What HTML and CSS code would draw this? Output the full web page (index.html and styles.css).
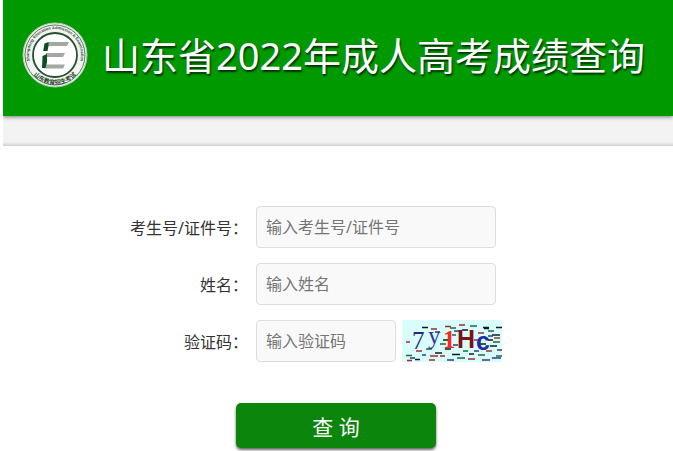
FILE: index.html
```
<!DOCTYPE html>
<html lang="zh-CN">
<head>
    <meta charset="UTF-8">
    <meta name="viewport" content="width=device-width, initial-scale=1.0">
    <title>山东省2022年成人高考成绩查询</title>
    <link rel="stylesheet" href="styles.css">
</head>
<body>
    <!-- 页头 -->
    <header class="header">
        <svg class="logo" viewBox="0 0 66 66" aria-hidden="true">
            <defs>
                <path id="arcTop" d="M 10.800 46.600 A 26 26 0 1 1 55.200 46.600"/>
                <path id="arcBottom" d="M 5 41 A 29 29 0 0 0 61 41"/>
            </defs>
            <circle cx="33" cy="33" r="32" fill="#f0f4f0" stroke="#b5cdb5"/>
            <circle cx="33" cy="33" r="30" fill="#f0f3f0" stroke="#5f7a62"/>
            <circle cx="33" cy="33" r="22" fill="#fff" stroke="#24502d" stroke-width="1.800"/>
            <text class="logo-en"><textPath href="#arcTop" startOffset="50%" text-anchor="middle">Shangdong Education Admission &amp; Examination</textPath></text>
            <text class="logo-cn"><textPath href="#arcBottom" startOffset="50%" text-anchor="middle">山东教育招生考试</textPath></text>
            <g fill="#a3a8a3">
                <path d="M26 20h21l-2 4h-19z"/>
                <path d="M24 31h19l-2 4h-17z"/>
                <path d="M22 42.500h21l-2 4h-19z"/>
            </g>
            <path fill="#0d4f20" d="M22.500 21.500l4-1.500v4l-1 5h-4.300zM20.500 34l4.500-2v8l-1.500 6h-3.500z"/>
        </svg>
        <h1>山东省2022年成人高考成绩查询</h1>
    </header>
    <div class="bar"></div>

    <!-- 查询表单 -->
    <form class="query">
        <div class="row">
            <label for="ksh">考生号/证件号：</label>
            <input type="text" id="ksh" placeholder="输入考生号/证件号">
        </div>
        <div class="row">
            <label for="xm">姓名：</label>
            <input type="text" id="xm" placeholder="输入姓名">
        </div>
        <div class="row">
            <label for="yzm">验证码：</label>
            <div class="code">
                <input type="text" id="yzm" placeholder="输入验证码">
                <svg class="captcha" viewBox="0 0 100 42" role="img" aria-label="验证码">
                    <rect width="100" height="42" fill="#d9fdfa"/>
                    <g fill="none" stroke-width="1.500">
                        <path stroke="#17171f" d="M20 7.500h6M81 7.500h6M82 8.500h5M90 15h8M60 10h6M33 33h7M50 34.500h8M78 24h6M88 26h7M13 39.500h5M43 29h6M67 34h5M94 7.500h6M41 20h5M86 20h5"/>
                        <path stroke="#1d6a3a" d="M48 8h6M68 6h7M4 35.500h6M55 38h8M86 11h6M91 22h7M38 24h6M24 29h6M76 35h7M50 15h4M94 36h6M61 31h5"/>
                        <path stroke="#a32b35" d="M29 9h6M43 6.500h6M57 5h6M76 13h6M92 18h6M5 40.500h5M28 36h8M27 40h6M66 39h7M84 31h6M72 20h6M14 31h6M38 36h5M4 22h4"/>
                        <path stroke="#2f3a8c" d="M33 12h5M52 11h6M86 16h5M95 30h5M8 38h5M45 40h7M72 31h5M80 40h8M51 25h5M20 35h4M90 38h9"/>
                    </g>
                    <text class="serif" x="10" y="29" fill="#29297f">7</text>
                    <text class="serif" x="26" y="24" fill="#34349c">y</text>
                    <text class="serif bold" x="41" y="28" fill="#f52a20">1</text>
                    <text class="bold" x="55" y="28" fill="#7d1018">H</text>
                    <text class="bold" x="74" y="30" fill="#1c2ca8">c</text>
                </svg>
            </div>
        </div>
        <button type="button">查 询</button>
    </form>
</body>
</html>
```
FILE: styles.css
```
body {
    margin: 0 0 0 3px;
    background: #fff;
    color: #333;
    font-family: "Noto Sans", "Noto Sans CJK SC", sans-serif;
    font-size: 16px;
}
.header {
    position: relative;
    display: flex;
    align-items: center;
    gap: 14px;
    padding: 22px 16px 28px 19px;
    background: #090;
    box-shadow: 0 1px 4px rgba(0,0,0,0.5);
}
.logo {
    flex: none;
    width: 66px;
    height: 66px;
}
.logo-en {
    font: bold 4px "Liberation Sans", sans-serif;
    fill: #2f4d34;
}
.logo-cn {
    font: bold 6px "Noto Sans CJK SC", sans-serif;
    fill: #1c4526;
}
h1 {
    margin: 0;
    color: #fff;
    font-size: 38px;
    font-weight: normal;
    line-height: 66px;
    white-space: nowrap;
    text-shadow: 1px 2px 2px rgba(0,0,0,0.7);
}
.bar {
    height: 30px;
    background: linear-gradient(#f3f3f3 26px, #d0d0d0);
}
.query {
    display: flex;
    flex-direction: column;
    gap: 15px;
    margin-right: 4px;
    padding: 60px 0 3px;
}
.row {
    display: grid;
    grid-template-columns: 35fr 59fr;
    align-items: center;
    gap: 8px;
}
label {
    text-align: right;
}
input {
    box-sizing: border-box;
    width: 240px;
    height: 42px;
    padding: 0 9px;
    border: 1px solid #ddd;
    border-radius: 4px;
    background: #f9f9f9;
    color: #333;
    font: inherit;
}
input::placeholder {
    color: #757575;
}
.code {
    display: flex;
    gap: 6px;
}
.code input {
    width: 140px;
}
.captcha {
    width: 100px;
    height: 42px;
    font: 25px "Liberation Sans", sans-serif;
}
.captcha .serif {
    font-family: "Liberation Serif", serif;
}
.captcha .bold {
    font-weight: bold;
}
button {
    align-self: center;
    width: 200px;
    height: 45px;
    margin-top: 26px;
    border: none;
    border-radius: 5px;
    background: #0c850c;
    color: #fff;
    font: inherit;
    font-size: 21px;
    box-shadow: 0 2px 3px rgba(0,0,0,0.6);
    cursor: pointer;
}
```
